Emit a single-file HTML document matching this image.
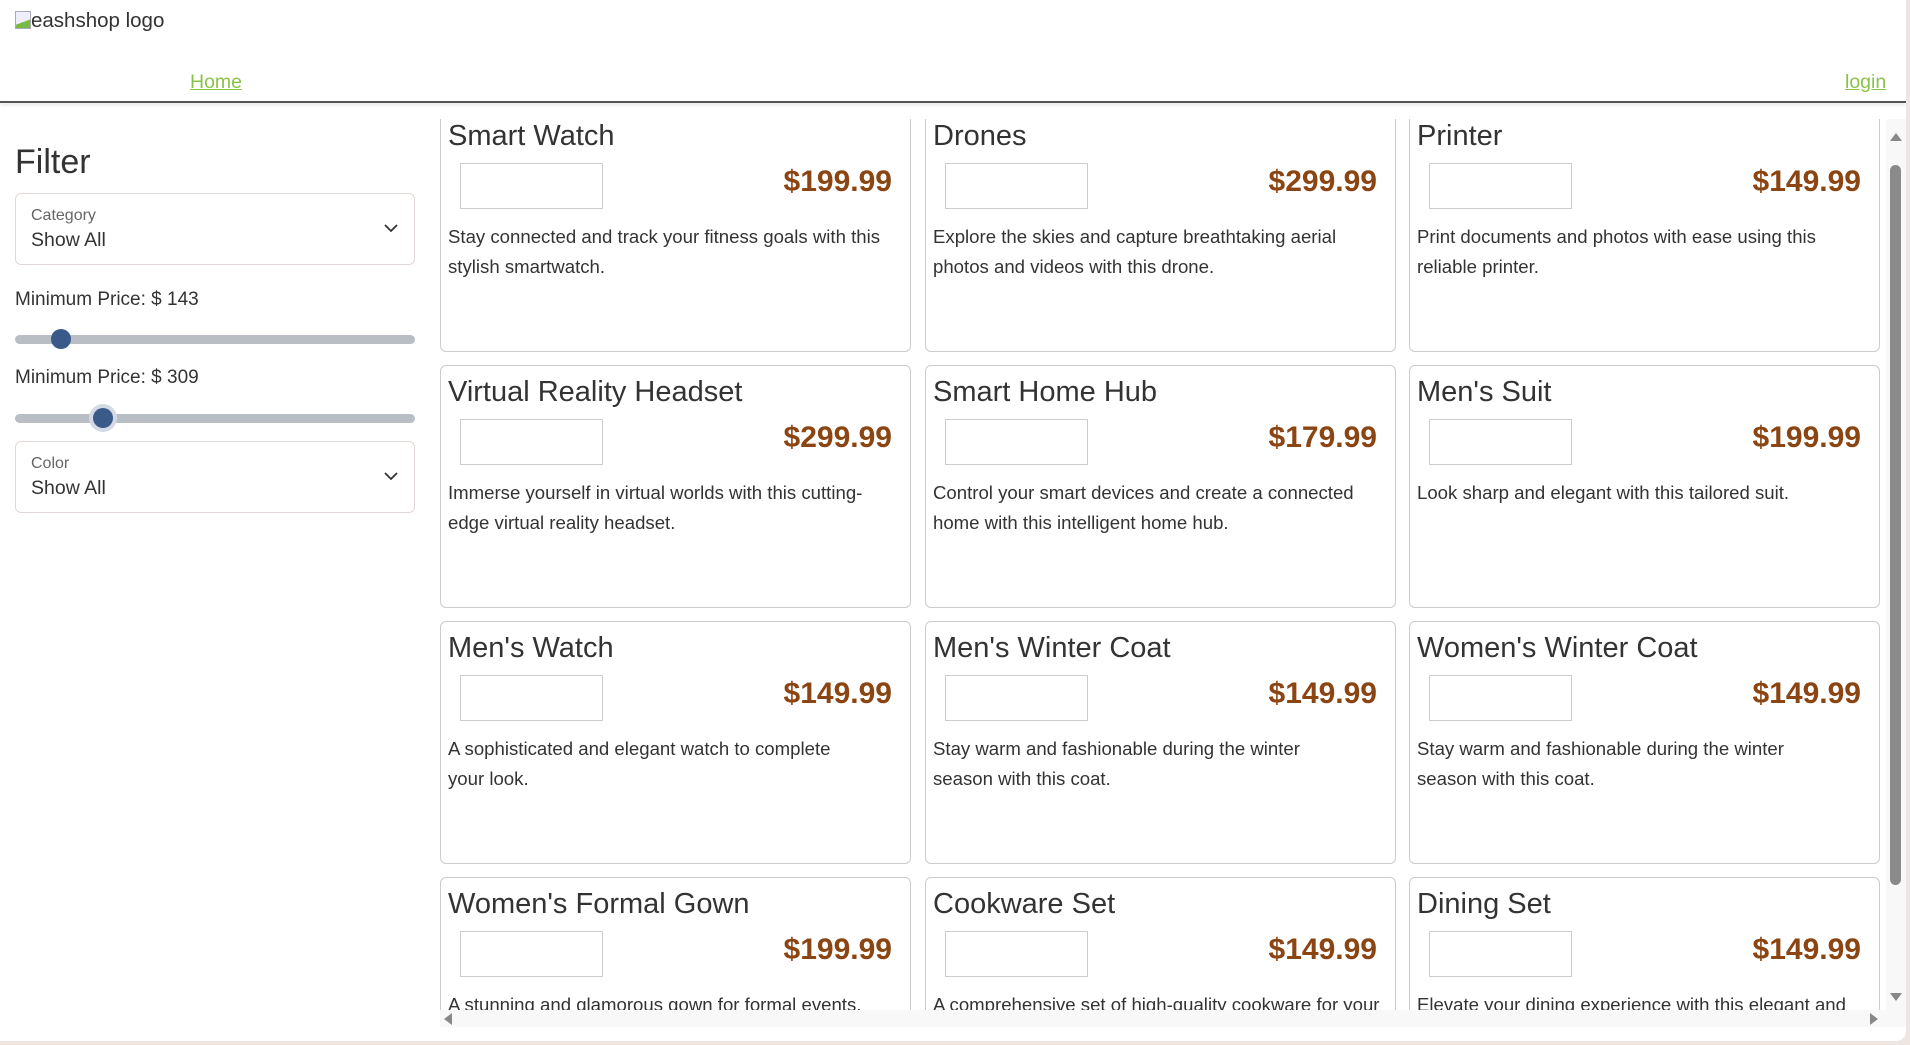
<!DOCTYPE html>
<html><head><style>
*{box-sizing:border-box;margin:0;padding:0}
html,body{width:1910px;height:1045px;overflow:hidden}
body{background:#efe6e2;font-family:"Liberation Sans",sans-serif;color:#333;position:relative}
.page{position:absolute;left:0;top:0;width:1906px;height:1041px;background:#fff;border-radius:0 0 10px 0;overflow:hidden}
.logo{position:absolute;left:15px;top:9px;font-size:20.5px;color:#333}
.logo i{display:inline-block;width:16px;height:18px;border:1px solid #aab;background:linear-gradient(160deg,#eef 60%,#7b4 60%);vertical-align:-2px}
a{color:#8bc34a;text-decoration:underline}
.home{position:absolute;left:190px;top:71px;font-size:19.5px}
.login{position:absolute;left:1845px;top:71px;font-size:19.5px}
.hr{position:absolute;left:0;top:101px;width:1906px;height:2px;background:#555;box-shadow:0 2px 3px #ddd}
.filter{position:absolute;left:15px;top:143px;font-size:34px}
.sel{position:absolute;left:15px;width:400px;height:72px;border:1px solid #e0d8d4;border-radius:6px}
.sel .l{position:absolute;left:15px;top:13px;font-size:16px;color:#666}
.sel .v{position:absolute;left:15px;top:35px;font-size:19.5px}
.sel svg{position:absolute;right:16px;top:30px}
.lbl{position:absolute;left:15px;font-size:19px}
.track{position:absolute;left:15px;width:400px;height:9px;border-radius:5px;background:#b8bec4}
.thumb{position:absolute;width:20px;height:20px;border-radius:50%;background:#3a5a8a}
.area{position:absolute;left:440px;top:119px;width:1446px;height:891px;overflow:hidden}
.card{position:absolute;width:471px;height:243px;border:1px solid #ccc;border-radius:6px;background:#fff}
.card h2{position:absolute;left:7px;top:10px;font-size:29px;font-weight:normal;color:#333;white-space:nowrap}
.card .img{position:absolute;left:19px;top:53px;width:143px;height:46px;border:1px solid #ccc}
.card .p{position:absolute;right:18px;top:55px;font-size:30px;font-weight:bold;color:#8b4513}
.card .d{position:absolute;left:7px;top:112px;width:455px;font-size:18.6px;line-height:30px}
.vs{position:absolute;left:1886px;top:119px;width:20px;height:908px;background:#f8f8f8}
.vthumb{position:absolute;left:1890px;top:165px;width:11px;height:720px;border-radius:6px;background:#8a8a8a}
.hs{position:absolute;left:440px;top:1010px;width:1446px;height:17px;background:#f8f8f8}
.tri{position:absolute;width:0;height:0}
</style></head><body><div class="page">
<div class="logo"><i></i>eashshop logo</div>
<a class="home">Home</a><a class="login">login</a>
<div class="hr"></div>
<div class="filter">Filter</div>
<div class="sel" style="top:193px"><div class="l">Category</div><div class="v">Show All</div><svg width="14" height="9" viewBox="0 0 14 9"><path d="M1 1l6 6 6-6" fill="none" stroke="#333" stroke-width="1.8"/></svg></div>
<div class="lbl" style="top:289px">Minimum Price: $ 143</div>
<div class="track" style="top:335px"></div><div class="thumb" style="left:51px;top:329px"></div>
<div class="lbl" style="top:367px">Minimum Price: $ 309</div>
<div class="track" style="top:414px"></div><div class="thumb" style="left:93px;top:408px;box-shadow:0 0 0 4px #d3dae5"></div>
<div class="sel" style="top:441px"><div class="l">Color</div><div class="v">Show All</div><svg width="14" height="9" viewBox="0 0 14 9"><path d="M1 1l6 6 6-6" fill="none" stroke="#333" stroke-width="1.8"/></svg></div>
<div class="area">
<div class="card" style="left:0;top:-10px"><h2>Smart Watch</h2><div class="img"></div><div class="p">$199.99</div><div class="d">Stay connected and track your fitness goals with this stylish smartwatch.</div></div>
<div class="card" style="left:485px;top:-10px"><h2>Drones</h2><div class="img"></div><div class="p">$299.99</div><div class="d">Explore the skies and capture breathtaking aerial photos and videos with this drone.</div></div>
<div class="card" style="left:969px;top:-10px"><h2>Printer</h2><div class="img"></div><div class="p">$149.99</div><div class="d">Print documents and photos with ease using this reliable printer.</div></div>
<div class="card" style="left:0;top:246px"><h2>Virtual Reality Headset</h2><div class="img"></div><div class="p">$299.99</div><div class="d">Immerse yourself in virtual worlds with this cutting-edge virtual reality headset.</div></div>
<div class="card" style="left:485px;top:246px"><h2>Smart Home Hub</h2><div class="img"></div><div class="p">$179.99</div><div class="d">Control your smart devices and create a connected home with this intelligent home hub.</div></div>
<div class="card" style="left:969px;top:246px"><h2>Men's Suit</h2><div class="img"></div><div class="p">$199.99</div><div class="d">Look sharp and elegant with this tailored suit.</div></div>
<div class="card" style="left:0;top:502px"><h2>Men's Watch</h2><div class="img"></div><div class="p">$149.99</div><div class="d">A sophisticated and elegant watch to complete<br>your look.</div></div>
<div class="card" style="left:485px;top:502px"><h2>Men's Winter Coat</h2><div class="img"></div><div class="p">$149.99</div><div class="d">Stay warm and fashionable during the winter<br>season with this coat.</div></div>
<div class="card" style="left:969px;top:502px"><h2>Women's Winter Coat</h2><div class="img"></div><div class="p">$149.99</div><div class="d">Stay warm and fashionable during the winter<br>season with this coat.</div></div>
<div class="card" style="left:0;top:758px"><h2>Women's Formal Gown</h2><div class="img"></div><div class="p">$199.99</div><div class="d">A stunning and glamorous gown for formal events.</div></div>
<div class="card" style="left:485px;top:758px"><h2>Cookware Set</h2><div class="img"></div><div class="p">$149.99</div><div class="d">A comprehensive set of high-quality cookware for your kitchen.</div></div>
<div class="card" style="left:969px;top:758px"><h2>Dining Set</h2><div class="img"></div><div class="p">$149.99</div><div class="d">Elevate your dining experience with this elegant and stylish dining set.</div></div>
</div>
<div class="hs"></div>
<div class="vs"></div><div class="vthumb"></div>
<div class="tri" style="left:1890px;top:133px;border-left:6px solid transparent;border-right:6px solid transparent;border-bottom:8px solid #888"></div>
<div class="tri" style="left:1890px;top:993px;border-left:6px solid transparent;border-right:6px solid transparent;border-top:8px solid #888"></div>
<div class="tri" style="left:444px;top:1013px;border-top:6px solid transparent;border-bottom:6px solid transparent;border-right:8px solid #888"></div>
<div class="tri" style="left:1870px;top:1013px;border-top:6px solid transparent;border-bottom:6px solid transparent;border-left:8px solid #888"></div>
</div></body></html>
